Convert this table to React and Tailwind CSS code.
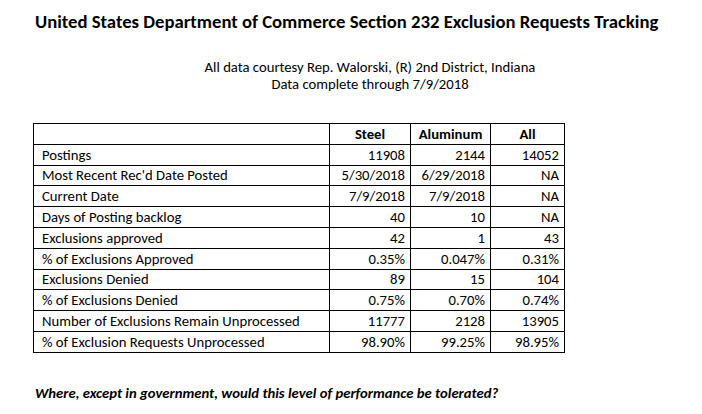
import React from "react";

const rows = [
  ["Postings", "11908", "2144", "14052"],
  ["Most Recent Rec'd Date Posted", "5/30/2018", "6/29/2018", "NA"],
  ["Current Date", "7/9/2018", "7/9/2018", "NA"],
  ["Days of Posting backlog", "40", "10", "NA"],
  ["Exclusions approved", "42", "1", "43"],
  ["% of Exclusions Approved", "0.35%", "0.047%", "0.31%"],
  ["Exclusions Denied", "89", "15", "104"],
  ["% of Exclusions Denied", "0.75%", "0.70%", "0.74%"],
  ["Number of Exclusions Remain Unprocessed", "11777", "2128", "13905"],
  ["% of Exclusion Requests Unprocessed", "98.90%", "99.25%", "98.95%"],
];

export default function App() {
  return (
    <div
      className="w-[702px] h-[414px] bg-white text-black overflow-hidden"
      style={{ fontFamily: "Carlito, Calibri, Lato, 'Open Sans', sans-serif" }}
    >
      <div className="pl-[35px] pt-[10px] text-[18.7px] font-bold leading-[24px] whitespace-nowrap">
        United States Department of Commerce Section 232 Exclusion Requests Tracking
      </div>
      <div className="mt-[25px] w-[740px] text-center text-[14.7px] leading-[17px]">
        <div>All data courtesy Rep. Walorski, (R) 2nd District, Indiana</div>
        <div>Data complete through 7/9/2018</div>
      </div>
      <table className="ml-[33px] mt-[30px] border-collapse text-[14.7px] leading-[18px]">
        <thead>
          <tr className="h-[20.8px]">
            <th className="w-[296px] p-0 border border-black"></th>
            <th className="w-[81px] p-0 border border-black text-center font-bold">Steel</th>
            <th className="w-[80px] p-0 border border-black text-center font-bold">Aluminum</th>
            <th className="w-[74px] p-0 border border-black text-center font-bold">All</th>
          </tr>
        </thead>
        <tbody>
          {rows.map((r) => (
            <tr key={r[0]} className="h-[20.8px]">
              <td className="border border-black p-0 pl-[8px] text-left whitespace-nowrap">{r[0]}</td>
              <td className="border border-black p-0 pr-[5px] text-right">{r[1]}</td>
              <td className="border border-black p-0 pr-[5px] text-right">{r[2]}</td>
              <td className="border border-black p-0 pr-[5px] text-right">{r[3]}</td>
            </tr>
          ))}
        </tbody>
      </table>
      <div className="pl-[35px] mt-[31px] text-[14.7px] font-bold italic leading-[18px] whitespace-nowrap">
        Where, except in government, would this level of performance be tolerated?
      </div>
    </div>
  );
}
